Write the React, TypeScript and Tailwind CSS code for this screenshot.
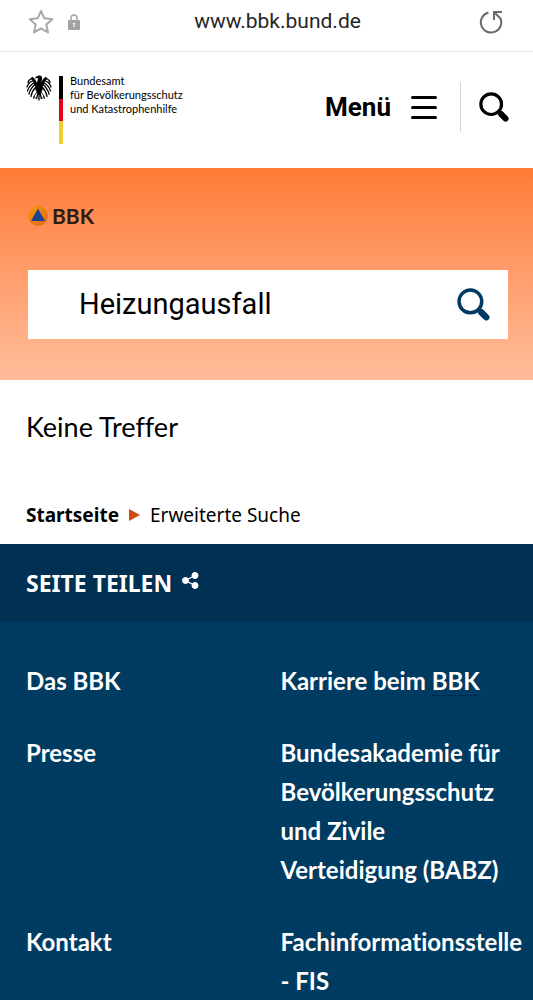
import { useState } from "react";

const FOOTER_LINKS = [
  { label: "Das BBK" },
  { label: "Karriere beim", abbr: "BBK" },
  { label: "Presse" },
  { label: "Bundesakademie für Bevölkerungsschutz und Zivile Verteidigung (BABZ)" },
  { label: "Kontakt" },
  { label: "Fachinformationsstelle - FIS" },
];

function SearchIcon({ className }: { className: string }) {
  return (
    <svg className={className} viewBox="0 0 32 32" fill="none" stroke="currentColor" aria-hidden="true">
      <circle cx="13" cy="13" r="11" strokeWidth="3.4" />
      <path d="M20 20l3 3" strokeWidth="4" />
      <path d="M22.500 22.500l6 6" strokeWidth="6" />
      <path d="M23.500 23.500l5 5" strokeWidth="6" strokeLinecap="round" />
    </svg>
  );
}

function Eagle() {
  return (
    <svg className="mt-px h-[26px] w-[26px] shrink-0" viewBox="0 0 52 52" fill="none" stroke="#000" aria-hidden="true">
      {/* head, beak and body */}
      <path
        d="M27 1c4 0 6 3 5 7l-1 6 3 4-1 12-4 7h-6l-4-7-1-12 4-4 2-5-1-3-6 1 3-3c2-2 4-3 7-3z"
        fill="#000"
        stroke="none"
      />
      {/* wings */}
      <path d="M20 20C18 12 15 8 11 6M32 20c2-8 5-12 9-14" strokeWidth="6" />
      <g strokeWidth="2.6" strokeLinecap="round">
        <path d="M12 6C8 8 5 11 4 15M15 11C9 13 4 18 2 24M17 15C10 19 5 25 3 32M18 19C12 24 8 30 6 38M19 25c-5 5-8 11-9 18" />
        <path d="M40 6c4 2 7 5 8 9M37 11c6 2 11 7 13 13M35 15c7 4 12 10 14 17M34 19c6 5 10 11 12 19M33 25c5 5 8 11 9 18" />
      </g>
      {/* tail and claws */}
      <path d="M26 34v17M24 36l-3 12M28 36l3 12" strokeWidth="2.6" />
      <path d="M22 34l-6 8-1 6M16 42l3 5M30 34l6 8 1 6M36 42l-3 5" strokeWidth="1.800" />
    </svg>
  );
}

function BrowserBar() {
  return (
    <div className="flex h-[52px] items-center border-b border-gray-200 pr-[30px] pb-2 pl-7 font-[Roboto,sans-serif]">
      <div className="flex flex-1 items-center gap-3.5">
        <button type="button" aria-label="Lesezeichen">
          <svg className="h-[26px] w-[26px]" viewBox="0 0 26 26" fill="none" stroke="#a8a8a8" strokeWidth="2" strokeLinejoin="round">
            <path d="M13 2l3.3 7.3 8 .9-6 5.3 1.7 7.9-7-4-7 4 1.700-7.900-6-5.300 8-.9z" />
          </svg>
        </button>
        <svg className="h-4 w-3" viewBox="0 0 12 16" fill="none" aria-hidden="true">
          <path d="M3 7V4a3 3 0 016 0v3" stroke="#a3a3a3" strokeWidth="1.400" />
          <rect y="6" width="12" height="10" rx="1" fill="#a3a3a3" />
          <path d="M6 9v4M5 9.500h2" stroke="#fff" strokeWidth="1.200" />
        </svg>
      </div>
      <span className="pl-6 text-[21px] text-neutral-800">www.bbk.bund.de</span>
      <div className="flex flex-1 justify-end">
        <button type="button" aria-label="Neu laden">
          <svg className="h-6 w-6" viewBox="0 0 24 24" fill="none" stroke="#6b6b6b" strokeWidth="2">
            <path d="M9.500 2.500A10.200 10.200 0 1 0 21 7.500" />
            <path d="M15 10V2h8M15 2l6 6" />
          </svg>
        </button>
      </div>
    </div>
  );
}

function SiteHeader() {
  return (
    <header className="flex h-[116px] items-start justify-between pt-[22px] pr-6 pl-[26px]">
      <a href="#" className="flex h-[70px] items-start">
        <Eagle />
        <span className="mr-[7px] ml-[7px] flex h-full w-1 flex-col pt-0.5">
          <span className="flex-1 bg-black" />
          <span className="flex-1 bg-[#e2001a]" />
          <span className="flex-1 bg-[#f3cd2b]" />
        </span>
        <span className="text-[11px] leading-[14px] text-black">
          Bundesamt
          <br />
          für Bevölkerungsschutz
          <br />
          und Katastrophenhilfe
        </span>
      </a>
      <div className="flex h-[66px] items-center">
        <button type="button" className="flex items-center gap-5 text-black">
          <span className="font-[Roboto,sans-serif] text-[26px] font-bold">Menü</span>
          <span className="flex w-[26px] flex-col gap-[7px]">
            <span className="h-[3px] rounded-full bg-black" />
            <span className="h-[3px] rounded-full bg-black" />
            <span className="h-[3px] rounded-full bg-black" />
          </span>
        </button>
        <span className="mr-[18px] ml-[23px] h-[50px] w-px bg-gray-300" />
        <button type="button" aria-label="Suche" className="text-black">
          <SearchIcon className="h-[30px] w-[30px]" />
        </button>
      </div>
    </header>
  );
}

function SearchBanner() {
  const [query, setQuery] = useState("Heizungausfall");

  return (
    <section className="h-[212px] bg-linear-to-b from-[#ff7a33] to-[#ffbd9a] pt-8 pr-[25px] pl-7">
      <div className="flex h-8 items-center gap-1 text-[21px] font-bold text-[#2d1c12]">
        <svg className="h-5 w-5" viewBox="0 0 20 20" aria-hidden="true">
          <defs>
            <linearGradient id="disc" x1="0" y1="0" x2="1" y2="1">
              <stop offset="0" stopColor="#f39a0c" />
              <stop offset="1" stopColor="#e2640f" />
            </linearGradient>
          </defs>
          <circle cx="10" cy="10" r="10" fill="url(#disc)" />
          <path d="M10 2.500L17 15H3z" fill="#1c4293" />
        </svg>
        BBK
      </div>
      <form className="mt-[38px] flex h-[69px] items-center bg-white pr-[18px] pl-[51px]" onSubmit={(e) => e.preventDefault()}>
        <input
          type="text"
          aria-label="Suchbegriff"
          value={query}
          onChange={(e) => setQuery(e.target.value)}
          className="min-w-0 flex-1 font-[Roboto,sans-serif] text-[29px] text-black outline-none"
        />
        <button type="submit" aria-label="Suchen" className="text-[#003a60]">
          <SearchIcon className="h-[33px] w-[33px]" />
        </button>
      </form>
    </section>
  );
}

export default function App() {
  return (
    <div className="min-h-screen overflow-x-hidden bg-white font-[Lato,sans-serif] [font-variant-ligatures:none]">
      <BrowserBar />
      <SiteHeader />
      <main>
        <SearchBanner />
        <p className="px-[26px] pt-[27px] text-[27px] leading-10 text-black">Keine Treffer</p>
        <nav aria-label="Brotkrumen" className="flex items-center gap-2.5 px-[26px] pt-[52px] pb-[13px] font-['Noto_Sans',sans-serif] text-[19px] leading-8 text-black">
          <a href="#" className="font-bold">Startseite</a>
          <svg className="h-3 w-[11px]" viewBox="0 0 11 12" fill="#cf4a0c" aria-hidden="true">
            <path d="M0 0l11 6-11 6z" />
          </svg>
          <span>Erweiterte Suche</span>
        </nav>
      </main>
      <footer className="bg-[#003b61] font-bold text-white">
        <div className="flex h-[78px] items-center bg-[#003152] px-[26px]">
          <button type="button" className="flex items-center gap-2.5 font-['Noto_Sans',sans-serif] text-[23px]">
            SEITE TEILEN
            <svg className="mb-1.5 h-[17px] w-[17px]" viewBox="0 0 17 17" fill="#fff" stroke="#fff" aria-hidden="true">
              <path d="M13 3.500L3.500 8.500l9.500 5" fill="none" strokeWidth="1.400" />
              <circle cx="13" cy="3.500" r="3" />
              <circle cx="3.500" cy="8.500" r="3" />
              <circle cx="13" cy="13.500" r="3" />
            </svg>
          </button>
        </div>
        <ul className="grid grid-cols-2 gap-x-7 gap-y-[33px] px-[26px] pt-[39px] text-2xl leading-[39px]">
          {FOOTER_LINKS.map((link) => (
            <li key={link.label} className="min-w-0">
              <a href="#">
                {link.label}
                {link.abbr && (
                  <>
                    {" "}
                    <abbr title="Bundesamt für Bevölkerungsschutz und Katastrophenhilfe" className="border-b border-dotted border-[#001a30] no-underline">
                      {link.abbr}
                    </abbr>
                  </>
                )}
              </a>
            </li>
          ))}
        </ul>
      </footer>
    </div>
  );
}
